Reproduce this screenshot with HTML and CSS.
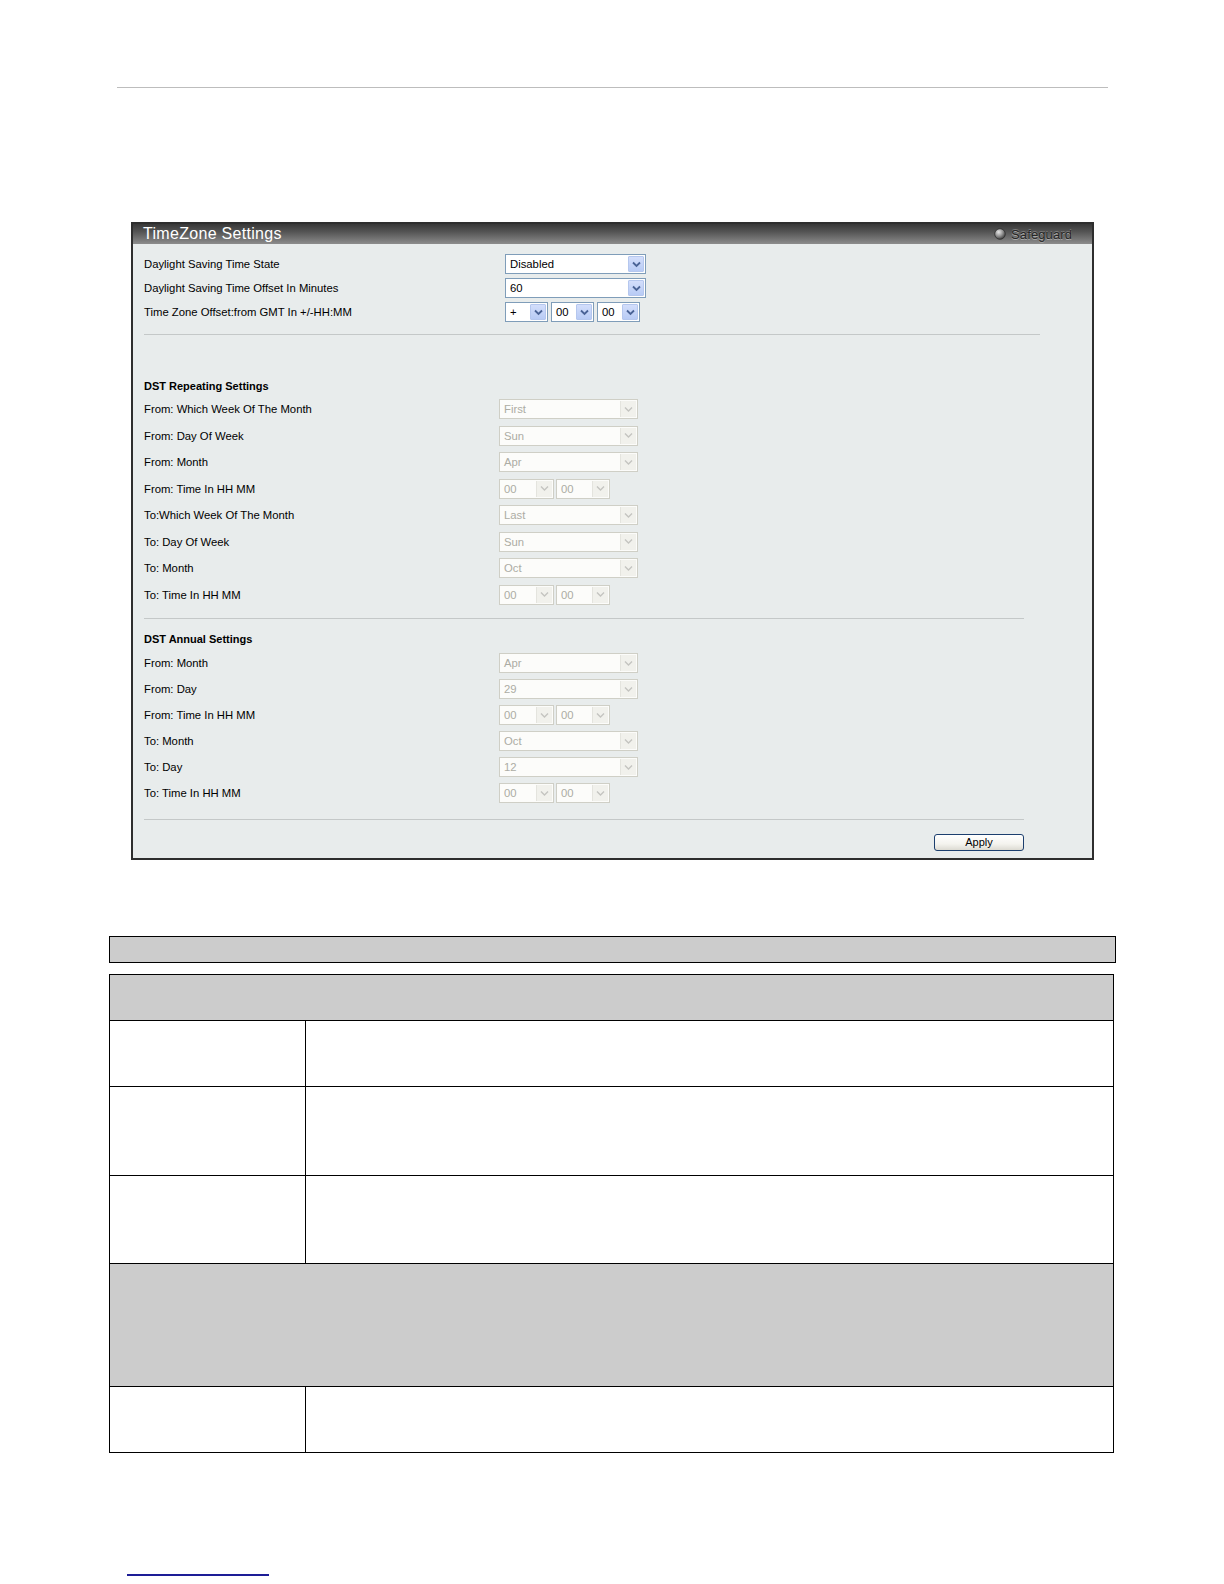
FILE: index.html
```html
<!DOCTYPE html>
<html>
<head>
<meta charset="utf-8">
<title>TimeZone Settings</title>
<link rel="stylesheet" href="styles.css">
</head>
<body>
<div class="page">
  <div class="top-rule"></div>

  <div class="panel">
    <div class="titlebar">
      <span class="title">TimeZone Settings</span>
      <span class="safeguard">
        <svg class="sg-icon" width="12" height="12" viewBox="0 0 12 12">
          <defs>
            <radialGradient id="sgg" cx="38%" cy="32%" r="70%">
              <stop offset="0" stop-color="#e8e8e8"/>
              <stop offset="0.5" stop-color="#9a9a9a"/>
              <stop offset="1" stop-color="#3c3c3c"/>
            </radialGradient>
          </defs>
          <circle cx="6" cy="6" r="5.3" fill="url(#sgg)" stroke="#2e2e2e" stroke-width="0.8"/>
        </svg>
        <span class="sg-text">Safeguard</span>
      </span>
    </div>

    <div class="body">
      <div class="row row-top">
        <div class="label lw-top">Daylight Saving Time State</div>
        <div class="sel sel-on w141"><span class="sel-val">Disabled</span><span class="arr arr-on"><svg width="9" height="7" viewBox="0 0 9 7"><path d="M1 1.5 L4.5 5 L8 1.5" fill="none" stroke="#4a6396" stroke-width="1.8"/></svg></span></div>
      </div>
      <div class="row row-top">
        <div class="label lw-top">Daylight Saving Time Offset In Minutes</div>
        <div class="sel sel-on w141"><span class="sel-val">60</span><span class="arr arr-on"><svg width="9" height="7" viewBox="0 0 9 7"><path d="M1 1.5 L4.5 5 L8 1.5" fill="none" stroke="#4a6396" stroke-width="1.8"/></svg></span></div>
      </div>
      <div class="row row-top">
        <div class="label lw-top">Time Zone Offset:from GMT In +/-HH:MM</div>
        <div class="sel-group g3">
          <div class="sel sel-on w43"><span class="sel-val">+</span><span class="arr arr-on"><svg width="9" height="7" viewBox="0 0 9 7"><path d="M1 1.5 L4.5 5 L8 1.5" fill="none" stroke="#4a6396" stroke-width="1.8"/></svg></span></div>
          <div class="sel sel-on w43"><span class="sel-val">00</span><span class="arr arr-on"><svg width="9" height="7" viewBox="0 0 9 7"><path d="M1 1.5 L4.5 5 L8 1.5" fill="none" stroke="#4a6396" stroke-width="1.8"/></svg></span></div>
          <div class="sel sel-on w43"><span class="sel-val">00</span><span class="arr arr-on"><svg width="9" height="7" viewBox="0 0 9 7"><path d="M1 1.5 L4.5 5 L8 1.5" fill="none" stroke="#4a6396" stroke-width="1.8"/></svg></span></div>
        </div>
      </div>

      <div class="sep sep-long"></div>

      <div class="heading heading-rep">DST Repeating Settings</div>
      <div class="row row-rep"><div class="label lw-dis">From: Which Week Of The Month</div><div class="sel sel-off w139"><span class="sel-val">First</span><span class="arr arr-off"><svg width="9" height="7" viewBox="0 0 9 7"><path d="M1 1.5 L4.5 5 L8 1.5" fill="none" stroke="#c4c4c0" stroke-width="1.4"/></svg></span></div></div>
      <div class="row row-rep"><div class="label lw-dis">From: Day Of Week</div><div class="sel sel-off w139"><span class="sel-val">Sun</span><span class="arr arr-off"><svg width="9" height="7" viewBox="0 0 9 7"><path d="M1 1.5 L4.5 5 L8 1.5" fill="none" stroke="#c4c4c0" stroke-width="1.4"/></svg></span></div></div>
      <div class="row row-rep"><div class="label lw-dis">From: Month</div><div class="sel sel-off w139"><span class="sel-val">Apr</span><span class="arr arr-off"><svg width="9" height="7" viewBox="0 0 9 7"><path d="M1 1.5 L4.5 5 L8 1.5" fill="none" stroke="#c4c4c0" stroke-width="1.4"/></svg></span></div></div>
      <div class="row row-rep"><div class="label lw-dis">From: Time In HH MM</div><div class="sel-group g2"><div class="sel sel-off w55"><span class="sel-val">00</span><span class="arr arr-off"><svg width="9" height="7" viewBox="0 0 9 7"><path d="M1 1.5 L4.5 5 L8 1.5" fill="none" stroke="#c4c4c0" stroke-width="1.4"/></svg></span></div><div class="sel sel-off w54"><span class="sel-val">00</span><span class="arr arr-off"><svg width="9" height="7" viewBox="0 0 9 7"><path d="M1 1.5 L4.5 5 L8 1.5" fill="none" stroke="#c4c4c0" stroke-width="1.4"/></svg></span></div></div></div>
      <div class="row row-rep"><div class="label lw-dis">To:Which Week Of The Month</div><div class="sel sel-off w139"><span class="sel-val">Last</span><span class="arr arr-off"><svg width="9" height="7" viewBox="0 0 9 7"><path d="M1 1.5 L4.5 5 L8 1.5" fill="none" stroke="#c4c4c0" stroke-width="1.4"/></svg></span></div></div>
      <div class="row row-rep"><div class="label lw-dis">To: Day Of Week</div><div class="sel sel-off w139"><span class="sel-val">Sun</span><span class="arr arr-off"><svg width="9" height="7" viewBox="0 0 9 7"><path d="M1 1.5 L4.5 5 L8 1.5" fill="none" stroke="#c4c4c0" stroke-width="1.4"/></svg></span></div></div>
      <div class="row row-rep"><div class="label lw-dis">To: Month</div><div class="sel sel-off w139"><span class="sel-val">Oct</span><span class="arr arr-off"><svg width="9" height="7" viewBox="0 0 9 7"><path d="M1 1.5 L4.5 5 L8 1.5" fill="none" stroke="#c4c4c0" stroke-width="1.4"/></svg></span></div></div>
      <div class="row row-rep"><div class="label lw-dis">To: Time In HH MM</div><div class="sel-group g2"><div class="sel sel-off w55"><span class="sel-val">00</span><span class="arr arr-off"><svg width="9" height="7" viewBox="0 0 9 7"><path d="M1 1.5 L4.5 5 L8 1.5" fill="none" stroke="#c4c4c0" stroke-width="1.4"/></svg></span></div><div class="sel sel-off w54"><span class="sel-val">00</span><span class="arr arr-off"><svg width="9" height="7" viewBox="0 0 9 7"><path d="M1 1.5 L4.5 5 L8 1.5" fill="none" stroke="#c4c4c0" stroke-width="1.4"/></svg></span></div></div></div>

      <div class="sep sep-short sep-2"></div>

      <div class="heading heading-ann">DST Annual Settings</div>
      <div class="row row-ann"><div class="label lw-dis">From: Month</div><div class="sel sel-off w139"><span class="sel-val">Apr</span><span class="arr arr-off"><svg width="9" height="7" viewBox="0 0 9 7"><path d="M1 1.5 L4.5 5 L8 1.5" fill="none" stroke="#c4c4c0" stroke-width="1.4"/></svg></span></div></div>
      <div class="row row-ann"><div class="label lw-dis">From: Day</div><div class="sel sel-off w139"><span class="sel-val">29</span><span class="arr arr-off"><svg width="9" height="7" viewBox="0 0 9 7"><path d="M1 1.5 L4.5 5 L8 1.5" fill="none" stroke="#c4c4c0" stroke-width="1.4"/></svg></span></div></div>
      <div class="row row-ann"><div class="label lw-dis">From: Time In HH MM</div><div class="sel-group g2"><div class="sel sel-off w55"><span class="sel-val">00</span><span class="arr arr-off"><svg width="9" height="7" viewBox="0 0 9 7"><path d="M1 1.5 L4.5 5 L8 1.5" fill="none" stroke="#c4c4c0" stroke-width="1.4"/></svg></span></div><div class="sel sel-off w54"><span class="sel-val">00</span><span class="arr arr-off"><svg width="9" height="7" viewBox="0 0 9 7"><path d="M1 1.5 L4.5 5 L8 1.5" fill="none" stroke="#c4c4c0" stroke-width="1.4"/></svg></span></div></div></div>
      <div class="row row-ann"><div class="label lw-dis">To: Month</div><div class="sel sel-off w139"><span class="sel-val">Oct</span><span class="arr arr-off"><svg width="9" height="7" viewBox="0 0 9 7"><path d="M1 1.5 L4.5 5 L8 1.5" fill="none" stroke="#c4c4c0" stroke-width="1.4"/></svg></span></div></div>
      <div class="row row-ann"><div class="label lw-dis">To: Day</div><div class="sel sel-off w139"><span class="sel-val">12</span><span class="arr arr-off"><svg width="9" height="7" viewBox="0 0 9 7"><path d="M1 1.5 L4.5 5 L8 1.5" fill="none" stroke="#c4c4c0" stroke-width="1.4"/></svg></span></div></div>
      <div class="row row-ann"><div class="label lw-dis">To: Time In HH MM</div><div class="sel-group g2"><div class="sel sel-off w55"><span class="sel-val">00</span><span class="arr arr-off"><svg width="9" height="7" viewBox="0 0 9 7"><path d="M1 1.5 L4.5 5 L8 1.5" fill="none" stroke="#c4c4c0" stroke-width="1.4"/></svg></span></div><div class="sel sel-off w54"><span class="sel-val">00</span><span class="arr arr-off"><svg width="9" height="7" viewBox="0 0 9 7"><path d="M1 1.5 L4.5 5 L8 1.5" fill="none" stroke="#c4c4c0" stroke-width="1.4"/></svg></span></div></div></div>

      <div class="sep sep-short sep-3"></div>

      <div class="actions">
        <button class="btn" type="button">Apply</button>
      </div>
    </div>
  </div>

  <div class="t1"></div>

  <div class="t2">
    <div class="t2-row t2-head h46 shade"></div>
    <div class="t2-row h66"><div class="c1"></div><div class="c2"></div></div>
    <div class="t2-row h89"><div class="c1"></div><div class="c2"></div></div>
    <div class="t2-row h88"><div class="c1"></div><div class="c2"></div></div>
    <div class="t2-row h123 shade"></div>
    <div class="t2-row h66"><div class="c1"></div><div class="c2"></div></div>
  </div>

  <div class="foot-rule"></div>
</div>
</body>
</html>
```

FILE: styles.css
```css
* { box-sizing: border-box; }
html, body { margin: 0; padding: 0; background: #ffffff; }
body {
  width: 1224px;
  height: 1584px;
  overflow: hidden;
  font-family: "Liberation Sans", Arial, sans-serif;
  color: #000;
}
.page { padding-top: 87px; }

.top-rule {
  margin-left: 117px;
  width: 991px;
  height: 1px;
  background: #bdbdbd;
}

/* Panel */
.panel {
  margin: 134px 0 0 131px;
  width: 963px;
  border: 2px solid #2e2e2e;
  background: #e8ecec;
}
.titlebar {
  height: 20px;
  display: flex;
  align-items: center;
  justify-content: space-between;
  padding: 0 20px 0 10px;
  background: linear-gradient(to bottom, #383838 0%, #555555 40%, #8c8c8c 100%);
}
.title {
  color: #ffffff;
  font-size: 16px;
  letter-spacing: 0.3px;
  line-height: 20px;
}
.safeguard {
  display: flex;
  align-items: center;
  gap: 5px;
}
.sg-icon { display: block; }
.sg-text {
  font-size: 13px;
  color: #262626;
  text-shadow: 0 1px 0 #a8a8a8, 0 -1px 0 #7a7a7a;
  letter-spacing: 0.1px;
}

.body { padding: 8px 0 7px 11px; }

.row { display: flex; align-items: center; }
.row-top { height: 24px; }
.row-rep { height: 26.5px; }
.row-ann { height: 26px; }

.label { font-size: 11.3px; white-space: nowrap; }
.lw-top { width: 361px; }
.lw-dis { width: 355px; }

.heading {
  font-size: 11px;
  font-weight: bold;
  display: flex;
  align-items: center;
}
.heading-rep { height: 21px; margin-top: 40px; }
.heading-ann { height: 22px; margin-top: 9px; }

.sep { height: 1px; background: #c4c8c8; }
.sep-long { width: 896px; margin-top: 10px; }
.sep-short { width: 880px; }
.sep-2 { margin-top: 10px; }
.sep-3 { margin-top: 13px; }

/* Select boxes */
.sel-group { display: flex; gap: 2px; }
.g3 { gap: 3px; }
.sel {
  height: 20px;
  display: flex;
  align-items: center;
  justify-content: space-between;
  padding: 1px 1px 1px 4px;
  font-size: 11.3px;
}
.sel-on { border: 1px solid #7f9db9; background: #ffffff; color: #000; }
.sel-off { border: 1px solid #cfcfc6; background: #fcfcfa; color: #acaca4; }
.sel-val { white-space: nowrap; }
.arr {
  width: 16px;
  height: 16px;
  display: flex;
  align-items: center;
  justify-content: center;
}
.arr svg { display: block; }
.arr-on {
  background: linear-gradient(to bottom, #d3defb, #b8cbf5);
  border: 1px solid #b5c7ee;
  border-radius: 1px;
}
.arr-off {
  background: #f1f1ec;
  border-left: 1px solid #e4e4de;
}
.w141 { width: 141px; }
.w139 { width: 139px; }
.w55 { width: 55px; }
.w54 { width: 54px; }
.w43 { width: 43px; }

/* Apply */
.actions {
  width: 880px;
  margin-top: 14px;
  display: flex;
  justify-content: flex-end;
}
.btn {
  width: 90px;
  height: 17px;
  padding: 0;
  border: 1px solid #1c3f6e;
  border-radius: 3px;
  background: linear-gradient(to bottom, #ffffff 0%, #f4f3ee 60%, #dcdad2 100%);
  font-family: "Liberation Sans", Arial, sans-serif;
  font-size: 11px;
  color: #000;
  line-height: 15px;
}

/* Tables */
.t1 {
  margin: 76px 0 0 109px;
  width: 1007px;
  height: 27px;
  border: 1px solid #000;
  background: #cccccc;
}
.t2 {
  margin: 11px 0 0 109px;
  width: 1005px;
  border: 1px solid #000;
  border-bottom: none;
}
.t2-row {
  display: flex;
  border-bottom: 1px solid #000;
}
.shade { background: #cccccc; }
.c1 { width: 196px; border-right: 1px solid #000; }
.c2 { flex: 1; }
.h46 { height: 46px; }
.h66 { height: 66px; }
.h89 { height: 89px; }
.h88 { height: 88px; }
.h123 { height: 123px; }

.foot-rule {
  margin: 121px 0 0 127px;
  width: 142px;
  height: 2px;
  background: #1d1d96;
}
```
